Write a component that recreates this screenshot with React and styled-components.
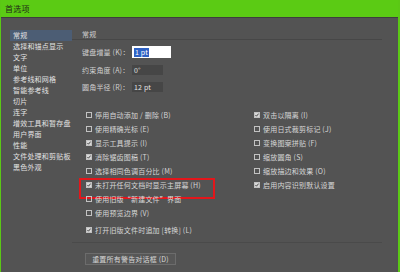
import React from "react";
import styled, { createGlobalStyle } from "styled-components";

const GlobalStyle = createGlobalStyle`
  html, body {
    margin: 0;
    padding: 0;
    background: #535353;
  }
  * {
    box-sizing: border-box;
  }
`;

const FONT = `"Noto Sans CJK SC", "Noto Sans", sans-serif`;

const Window = styled.div`
  width: 400px;
  height: 272px;
  display: flex;
  flex-direction: column;
  background: #535353;
  border-left: 1px solid #5bc815;
  border-right: 2px solid #5bc815;
  font-family: ${FONT};
  color: #d6d6d6;
  font-size: 7px;
  letter-spacing: 0.2px;
  overflow: hidden;
`;

const TitleBar = styled.div`
  height: 18px;
  flex: none;
  display: flex;
  align-items: center;
  padding-left: 4px;
  background: #5bcb14;
  border-bottom: 1px solid #3e3e3e;
  color: #1f2a18;
  font-size: 8px;
`;

const Content = styled.div`
  flex: 1;
  display: flex;
`;

const Sidebar = styled.div`
  width: 71px;
  flex: none;
  padding: 12px 0 0 9px;
`;

const NavItem = styled.div`
  height: 11px;
  line-height: 11px;
  padding-left: 3px;
  white-space: nowrap;
  color: #e2e2e2;
  background: ${(p) => (p.$active ? "#4c5d74" : "transparent")};
`;

const Main = styled.div`
  width: 310px;
  flex: none;
  display: flex;
  flex-direction: column;
`;

const SectionTitle = styled.div`
  height: 22px;
  padding: 10px 0 0 10px;
  line-height: 12px;
  border-bottom: 1px solid #474747;
  color: #cfcfcf;
`;

const Fields = styled.div`
  display: flex;
  flex-direction: column;
  gap: 5.5px;
  padding: 6px 0 0 10px;
`;

const FieldRow = styled.div`
  display: flex;
  align-items: center;
  height: 12px;
`;

const FieldLabel = styled.span`
  width: 50px;
  white-space: nowrap;
  color: #cfcfcf;
`;

const ValueBox = styled.div`
  width: ${(p) => (p.$focused ? 39 : 31)}px;
  height: ${(p) => (p.$focused ? 12 : 10)}px;
  display: flex;
  align-items: center;
  padding-left: 2px;
  background: ${(p) => (p.$focused ? "#ffffff" : "#464646")};
  color: #e4e4e4;
  white-space: nowrap;
`;

const Selected = styled.span`
  background: #2f62c4;
  color: #ffffff;
  padding: 0 1px;
  line-height: 9px;
`;

const Options = styled.div`
  display: grid;
  grid-template-columns: 168px 1fr;
  padding: 14.5px 0 0 14px;
`;

const Column = styled.div`
  display: flex;
  flex-direction: column;
`;

const OptionRow = styled.div`
  position: relative;
  height: 14px;
  display: flex;
  align-items: center;
  gap: 3px;
  white-space: nowrap;
  margin-top: ${(p) => (p.$spaced ? 3 : 0)}px;

  ${(p) =>
    p.$highlight &&
    `
    &::after {
      content: "";
      position: absolute;
      left: -7px;
      top: 0;
      width: 132px;
      height: 17px;
      border: 2px solid #e3161b;
    }
  `}
`;

const Box = styled.span`
  width: 6px;
  height: 6px;
  flex: none;
  display: flex;
  align-items: center;
  justify-content: center;
  border: 1px solid #c2c2c2;
  background: ${(p) => (p.$checked ? "#d8d8d8" : "transparent")};
`;

const Separator = styled.div`
  margin-top: 5px;
  border-top: 1px solid #4a4a4a;
`;

const Button = styled.div`
  margin: 10px 0 0 13px;
  width: 91px;
  height: 12px;
  display: flex;
  align-items: center;
  justify-content: center;
  border: 1px solid #6c6c6c;
  background: #575757;
  white-space: nowrap;
`;

const navItems = [
  "常规",
  "选择和锚点显示",
  "文字",
  "单位",
  "参考线和网格",
  "智能参考线",
  "切片",
  "连字",
  "增效工具和暂存盘",
  "用户界面",
  "性能",
  "文件处理和剪贴板",
  "黑色外观",
];

const leftOptions = [
  { label: "停用自动添加 / 删除 (B)" },
  { label: "使用精确光标 (E)" },
  { label: "显示工具提示 (I)", checked: true },
  { label: "消除锯齿图稿 (T)", checked: true },
  { label: "选择相同色调百分比 (M)" },
  { label: "未打开任何文档时显示主屏幕 (H)", checked: true, highlight: true },
  { label: "使用旧版“新建文件”界面" },
  { label: "使用预览边界 (V)" },
  { label: "打开旧版文件时追加 [转换] (L)", checked: true, spaced: true },
];

const rightOptions = [
  { label: "双击以隔离 (I)", checked: true },
  { label: "使用日式裁剪标记 (J)" },
  { label: "变换图案拼贴 (F)" },
  { label: "缩放圆角 (S)" },
  { label: "缩放描边和效果 (O)" },
  { label: "启用内容识别默认设置", checked: true },
];

const Check = ({ checked }) => (
  <Box $checked={checked}>
    {checked && (
      <svg width="4" height="4" viewBox="0 0 4 4">
        <polyline points="0.4,2 1.5,3.2 3.6,0.6" fill="none" stroke="#3a3a3a" strokeWidth="0.9" />
      </svg>
    )}
  </Box>
);

const Option = ({ label, checked, highlight, spaced }) => (
  <OptionRow $highlight={highlight} $spaced={spaced}>
    <Check checked={checked} />
    <span>{label}</span>
  </OptionRow>
);

const App = () => {
  return (
    <>
      <GlobalStyle />
      <Window>
        <TitleBar>首选项</TitleBar>
        <Content>
          <Sidebar>
            {navItems.map((item, i) => (
              <NavItem key={item} $active={i === 0}>
                {item}
              </NavItem>
            ))}
          </Sidebar>
          <Main>
            <SectionTitle>常规</SectionTitle>
            <Fields>
              <FieldRow>
                <FieldLabel>键盘增量 (K)：</FieldLabel>
                <ValueBox $focused>
                  <Selected>1 pt</Selected>
                </ValueBox>
              </FieldRow>
              <FieldRow>
                <FieldLabel>约束角度 (A)：</FieldLabel>
                <ValueBox>0°</ValueBox>
              </FieldRow>
              <FieldRow>
                <FieldLabel>圆角半径 (R)：</FieldLabel>
                <ValueBox>12 pt</ValueBox>
              </FieldRow>
            </Fields>
            <Options>
              <Column>
                {leftOptions.map((o) => (
                  <Option key={o.label} {...o} />
                ))}
              </Column>
              <Column>
                {rightOptions.map((o) => (
                  <Option key={o.label} {...o} />
                ))}
              </Column>
            </Options>
            <Separator />
            <Button>重置所有警告对话框 (D)</Button>
          </Main>
        </Content>
      </Window>
    </>
  );
};

export default App;
